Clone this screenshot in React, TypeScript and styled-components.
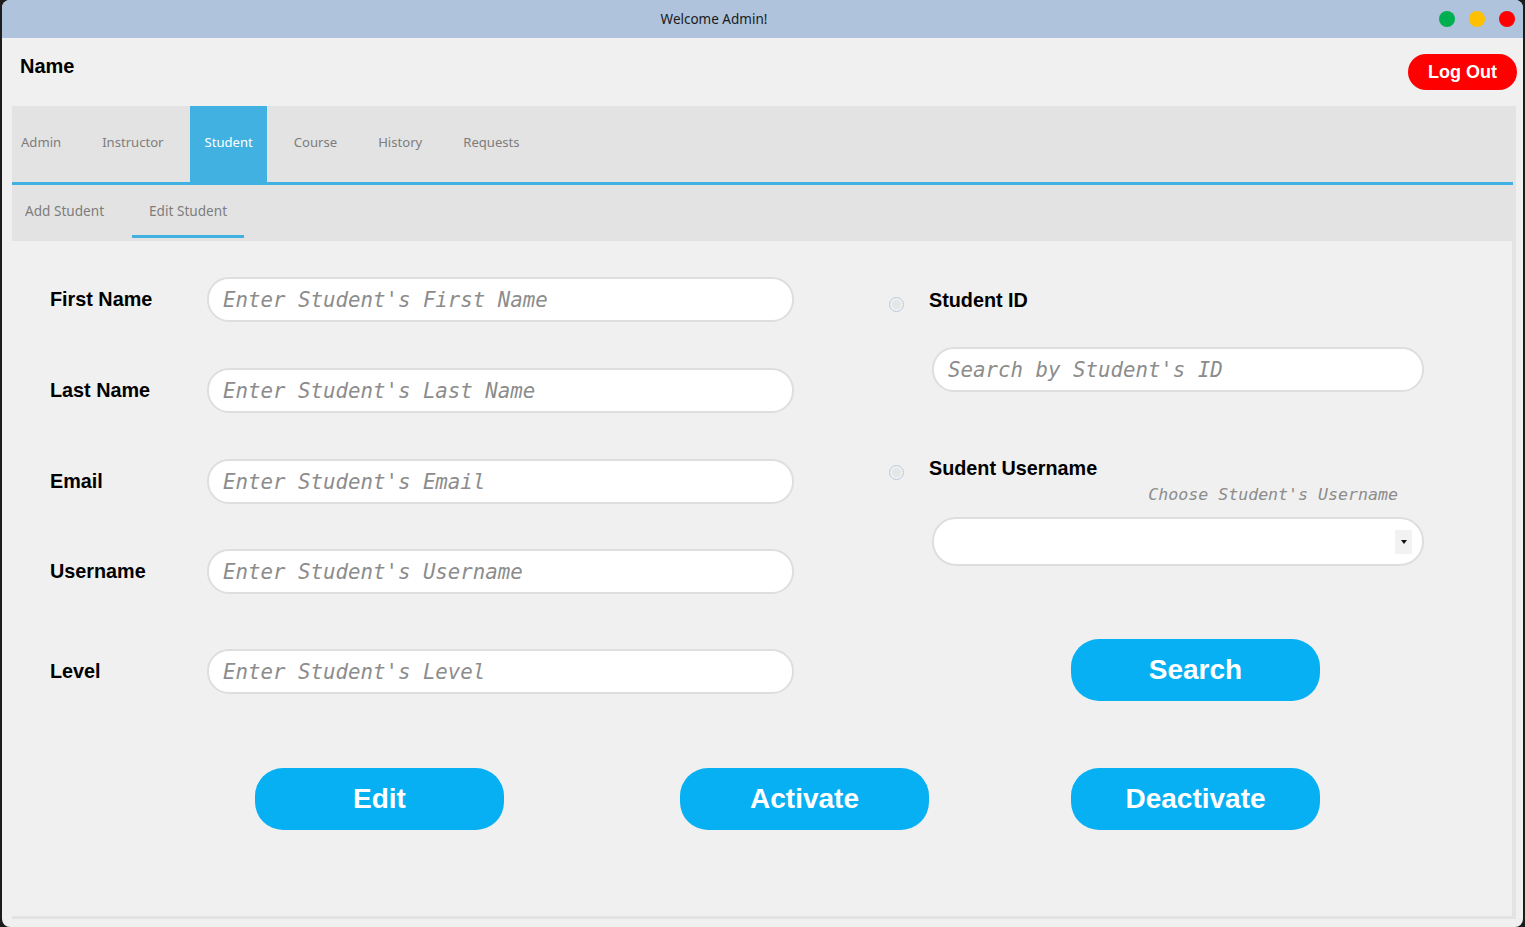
import React from 'react';
import styled, { createGlobalStyle } from 'styled-components';

const GlobalStyle = createGlobalStyle`
    html, body {
        margin: 0;
        padding: 0;
        background: #1c1c1c;
        overflow: hidden;
    }
`;

const Window = styled.div`
    margin-left: 2px;
    width: 1521px;
    height: 927px;
    background: #f0f0f0;
    border-radius: 8px;
    overflow: hidden;
    display: flex;
    flex-direction: column;
    font-family: 'Liberation Sans', Arial, sans-serif;
`;

const TitleBar = styled.div`
    height: 38px;
    background: #afc3dc;
    display: flex;
    align-items: center;
    justify-content: center;
    padding-right: 97px;
    position: relative;
    font-family: 'Noto Sans', sans-serif;
    font-size: 13.5px;
    color: #1a1a1a;
`;

const Dots = styled.div`
    position: absolute;
    right: 8px;
    top: 11px;
    display: flex;
    gap: 14px;
`;

const Dot = styled.span<{ $color: string }>`
    width: 16px;
    height: 16px;
    border-radius: 50%;
    background: ${(p) => p.$color};
`;

const Header = styled.div`
    height: 68px;
    display: flex;
    justify-content: space-between;
    align-items: flex-start;
    padding: 0 6px 0 18px;
`;

const UserName = styled.div`
    margin-top: 17px;
    font-size: 20px;
    font-weight: bold;
    color: #000;
`;

const LogOutButton = styled.button`
    margin-top: 16px;
    width: 109px;
    height: 36px;
    border: none;
    border-radius: 18px;
    background: #ff0000;
    color: #fff;
    font-family: 'Liberation Sans', Arial, sans-serif;
    font-size: 18px;
    font-weight: bold;
    cursor: pointer;
`;

const TabPane = styled.div`
    margin: 0 7px 0 10px;
    height: 813px;
    background: #e3e3e3;
    display: flex;
    flex-direction: column;
`;

const TabBar = styled.div`
    height: 76px;
    display: flex;
    gap: 12px;
    border-bottom: 3px solid #41b1e1;
    margin-right: 3px;
`;

const Tab = styled.div<{ $active?: boolean; $first?: boolean }>`
    display: flex;
    align-items: center;
    padding: 0 14px 4px ${(p) => (p.$first ? '9px' : '15px')};
    background: ${(p) => (p.$active ? '#41b1e1' : 'transparent')};
    color: ${(p) => (p.$active ? '#fff' : '#7d7d7d')};
    font-family: 'Noto Sans', sans-serif;
    font-size: 13.1px;
`;

const SubTabBar = styled.div`
    height: 55px;
    display: flex;
    gap: 11px;
`;

const SubTab = styled.div<{ $active?: boolean; $first?: boolean }>`
    display: flex;
    align-items: center;
    padding: 0 17px 0 ${(p) => (p.$first ? '13px' : '17px')};
    border-bottom: 3px solid ${(p) => (p.$active ? '#41b1e1' : 'transparent')};
    color: #7d7d7d;
    font-family: 'Noto Sans', sans-serif;
    font-size: 13.6px;
    margin-bottom: 2px;
`;

const Content = styled.div`
    margin: 1px 4px 3px 0;
    flex: 1;
    background: #f0f0f0;
    padding-top: 36px;
    display: flex;
    flex-direction: column;
`;

const TopSection = styled.div`
    display: flex;
`;

const LeftForm = styled.div`
    width: 744px;
    padding-left: 38px;
    display: flex;
    flex-direction: column;
`;

const FieldRow = styled.div<{ $top: number }>`
    display: flex;
    align-items: center;
    height: 45px;
    margin-top: ${(p) => p.$top}px;
`;

const FieldLabel = styled.div`
    width: 157px;
    font-size: 19.8px;
    font-weight: bold;
    color: #000;
`;

const TextInput = styled.input<{ $width: number }>`
    box-sizing: border-box;
    width: ${(p) => p.$width}px;
    height: 45px;
    border: 2px solid #dedede;
    border-radius: 22px;
    background: #fff;
    padding: 0 14px;
    outline: none;
    font-family: 'DejaVu Sans Mono', monospace;
    font-style: italic;
    font-size: 20.75px;
    color: #333;

    &::placeholder {
        color: #8c8c8c;
    }
`;

const RightForm = styled.div`
    margin-left: 95px;
    width: 535px;
    display: flex;
    flex-direction: column;
`;

const RadioRow = styled.label<{ $top: number }>`
    display: flex;
    align-items: center;
    margin-top: ${(p) => p.$top}px;
    height: 22px;
`;

const Radio = styled.span`
    box-sizing: border-box;
    width: 15px;
    height: 15px;
    margin-top: 9px;
    margin-right: 25px;
    border-radius: 50%;
    border: 1px solid #b9c9dc;
    background: radial-gradient(circle, #e6e6e6 40%, #f4f4f4 70%);
`;

const RadioLabel = styled.span`
    font-size: 19.8px;
    font-weight: bold;
    color: #000;
`;

const SideInputWrap = styled.div<{ $top: number }>`
    margin-top: ${(p) => p.$top}px;
    padding-left: 43px;
`;

const Hint = styled.div`
    margin-top: 8px;
    height: 16px;
    line-height: 16px;
    text-align: right;
    padding-right: 26px;
    font-family: 'DejaVu Sans Mono', monospace;
    font-style: italic;
    font-size: 16.6px;
    color: #8c8c8c;
`;

const Combo = styled.div`
    box-sizing: border-box;
    margin: 14px 0 0 43px;
    width: 492px;
    height: 49px;
    border: 2px solid #dedede;
    border-radius: 24px;
    background: #fff;
    display: flex;
    justify-content: flex-end;
    align-items: center;
    padding-right: 10px;
`;

const ComboArrow = styled.span`
    width: 17px;
    height: 24px;
    background: #f2f2f2;
    display: flex;
    align-items: center;
    justify-content: center;

    &::after {
        content: '';
        border-left: 3px solid transparent;
        border-right: 3px solid transparent;
        border-top: 4px solid #111;
    }
`;

const ActionButton = styled.button<{ $left: number }>`
    width: 249px;
    height: 62px;
    margin-left: ${(p) => p.$left}px;
    border: none;
    border-radius: 28px;
    background: #07b0f3;
    color: #fff;
    font-family: 'Liberation Sans', Arial, sans-serif;
    font-size: 28px;
    font-weight: bold;
    cursor: pointer;
    flex-shrink: 0;
`;

const SearchWrap = styled.div`
    margin-top: 73px;
    display: flex;
`;

const ButtonRow = styled.div`
    margin-top: 67px;
    display: flex;
`;

const tabs = ['Admin', 'Instructor', 'Student', 'Course', 'History', 'Requests'];

const fields = [
    { label: 'First Name', placeholder: "Enter Student's First Name", top: 0 },
    { label: 'Last Name', placeholder: "Enter Student's Last Name", top: 46 },
    { label: 'Email', placeholder: "Enter Student's Email", top: 46 },
    { label: 'Username', placeholder: "Enter Student's Username", top: 45 },
    { label: 'Level', placeholder: "Enter Student's Level", top: 55 },
];

const App: React.FC = () => {
    return (
        <>
            <GlobalStyle />
            <Window>
                <TitleBar>
                    Welcome Admin!
                    <Dots>
                        <Dot $color="#00b050" />
                        <Dot $color="#ffc000" />
                        <Dot $color="#ff0000" />
                    </Dots>
                </TitleBar>
                <Header>
                    <UserName>Name</UserName>
                    <LogOutButton>Log Out</LogOutButton>
                </Header>
                <TabPane>
                    <TabBar>
                        {tabs.map((t, i) => (
                            <Tab key={t} $first={i === 0} $active={t === 'Student'}>
                                {t}
                            </Tab>
                        ))}
                    </TabBar>
                    <SubTabBar>
                        <SubTab $first>Add Student</SubTab>
                        <SubTab $active>Edit Student</SubTab>
                    </SubTabBar>
                    <Content>
                        <TopSection>
                            <LeftForm>
                                {fields.map((f) => (
                                    <FieldRow key={f.label} $top={f.top}>
                                        <FieldLabel>{f.label}</FieldLabel>
                                        <TextInput $width={587} placeholder={f.placeholder} />
                                    </FieldRow>
                                ))}
                            </LeftForm>
                            <RightForm>
                                <RadioRow $top={12}>
                                    <Radio />
                                    <RadioLabel>Student ID</RadioLabel>
                                </RadioRow>
                                <SideInputWrap $top={36}>
                                    <TextInput $width={492} placeholder="Search by Student's ID" />
                                </SideInputWrap>
                                <RadioRow $top={65}>
                                    <Radio />
                                    <RadioLabel>Sudent Username</RadioLabel>
                                </RadioRow>
                                <Hint>Choose Student's Username</Hint>
                                <Combo>
                                    <ComboArrow />
                                </Combo>
                                <SearchWrap>
                                    <ActionButton $left={182}>Search</ActionButton>
                                </SearchWrap>
                            </RightForm>
                        </TopSection>
                        <ButtonRow>
                            <ActionButton $left={243}>Edit</ActionButton>
                            <ActionButton $left={176}>Activate</ActionButton>
                            <ActionButton $left={142}>Deactivate</ActionButton>
                        </ButtonRow>
                    </Content>
                </TabPane>
            </Window>
        </>
    );
};

export default App;
